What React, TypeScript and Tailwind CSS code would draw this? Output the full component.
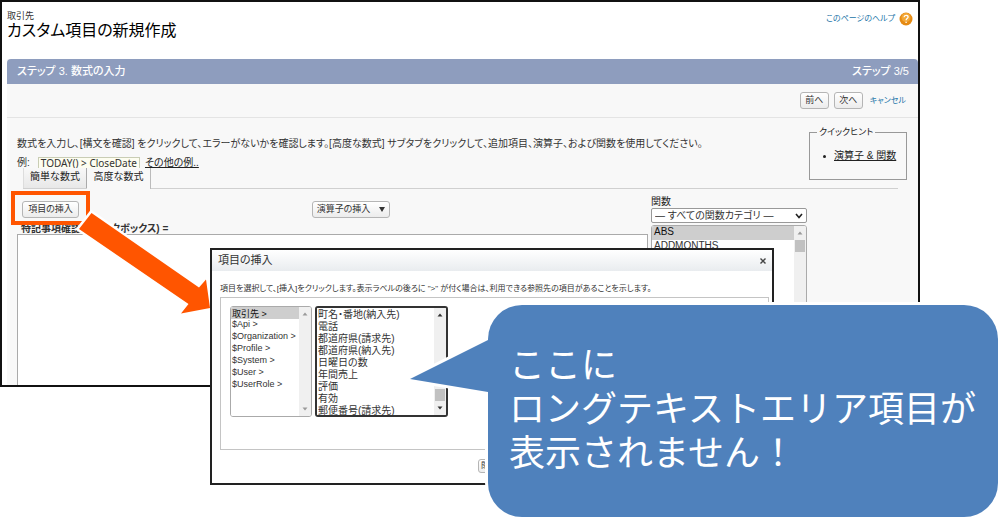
import type { ReactNode } from "react";
import clsx from "clsx";

const OBJECTS = [
  "取引先 >",
  "$Api >",
  "$Organization >",
  "$Profile >",
  "$System >",
  "$User >",
  "$UserRole >",
];

const FIELDS = [
  "町名・番地(納入先)",
  "電話",
  "都道府県(請求先)",
  "都道府県(納入先)",
  "日曜日の数",
  "年間売上",
  "評価",
  "有効",
  "郵便番号(請求先)",
];

const FUNCTIONS = ["ABS", "ADDMONTHS", "AND", "BEGINS", "BLANKVALUE", "BR", "CASE", "CASESAFEID", "CEILING"];

function SmallButton({ children, className }: { children: ReactNode; className?: string }) {
  return (
    <button
      type="button"
      className={clsx(
        "flex items-center justify-center rounded-[3px] border border-[#b5b5b5] bg-linear-to-b from-white to-[#ececec] leading-none whitespace-nowrap text-[#333]",
        className,
      )}
    >
      {children}
    </button>
  );
}

function ScrollTrack({ muted, thumb }: { muted?: boolean; thumb?: "start" | "end" }) {
  const color = muted ? "#9a9a9a" : "#333";
  return (
    <div className="flex w-3 shrink-0 flex-col items-center bg-[#f0f0f0]" aria-hidden="true">
      <svg viewBox="0 0 12 14" className="h-[14px] w-3 shrink-0">
        <path d="M3.5 8.5 6 5.5 8.5 8.5Z" fill={color} />
      </svg>
      {thumb === "start" && <div className="h-3 w-[10px] bg-[#c1c1c1]" />}
      <div className="grow" />
      {thumb === "end" && <div className="h-3 w-[10px] bg-[#c1c1c1]" />}
      <svg viewBox="0 0 12 14" className="h-[14px] w-3 shrink-0">
        <path d="M3.5 5.5 6 8.5 8.5 5.5Z" fill={color} />
      </svg>
    </div>
  );
}

type ListBoxProps = {
  label: string;
  items: string[];
  selected?: string;
  active?: boolean;
  thumb?: "start" | "end";
  className?: string;
  optionClassName: string;
};

function ListBox({ label, items, selected, active, thumb, className, optionClassName }: ListBoxProps) {
  return (
    <div
      className={clsx(
        "flex overflow-hidden rounded-[3px] bg-white",
        active ? "border-2 border-[#333]" : "border border-[#aaa]",
        className,
      )}
    >
      <select
        aria-label={label}
        multiple
        size={items.length}
        defaultValue={selected ? [selected] : []}
        className={clsx(
          "min-w-0 grow overflow-hidden bg-white text-[#333] outline-none [scrollbar-width:none]",
          active && "-mt-[2px]",
        )}
      >
        {items.map((item) => (
          <option key={item} value={item} className={optionClassName}>
            {item}
          </option>
        ))}
      </select>
      <ScrollTrack muted={!active} thumb={thumb} />
    </div>
  );
}

function PageHeader() {
  return (
    <header className="flex items-start justify-between px-[5px] pt-2">
      <div>
        <p className="text-[9px] leading-3">取引先</p>
        <h1 className="text-base leading-[17px] text-black">カスタム項目の新規作成</h1>
      </div>
      <a href="#help" className="flex items-center gap-1 pt-[2px] text-[8px] text-[#1b75a8]">
        このページのヘルプ
        <svg viewBox="0 0 14 14" className="size-[14px]" aria-hidden="true">
          <circle cx="7" cy="7" r="6.5" fill="#e58a12" />
          <circle cx="7" cy="5.5" r="4.5" fill="#f3a737" />
          <path
            d="M5 5.3c.1-1.3 1-1.9 2.1-1.9 1.2 0 2 .7 2 1.7 0 1.4-2 1.6-2 3.1M7.1 9.7v1.2"
            fill="none"
            stroke="#fff"
            strokeWidth="1.3"
          />
        </svg>
      </a>
    </header>
  );
}

function QuickTips() {
  return (
    <fieldset className="h-[54px] w-[98px] shrink-0 border border-[#999] pl-[13px]">
      <legend className="-ml-[6px] px-[2px] text-[9px] leading-3 text-[#222]">クイックヒント</legend>
      <ul className="pt-[10px] text-[10px] leading-4 whitespace-nowrap text-[#222]">
        <li className="flex items-center gap-2">
          <span className="size-[3px] rounded-full bg-[#222]" />
          <a href="#functions" className="underline">
            演算子 &amp; 関数
          </a>
        </li>
      </ul>
    </fieldset>
  );
}

function FormulaEditor() {
  return (
    <div className="flex gap-[3px] pr-[111px] pl-[10px]">
      <div className="min-w-0 grow">
        <div className="flex h-[34px] items-center gap-[233px] pt-[6px] pl-[5px]">
          <SmallButton className="h-[17px] w-[57px] text-[9px]">項目の挿入</SmallButton>
          <SmallButton className="h-[17px] w-[78px] gap-[9px] text-[9px]">
            演算子の挿入
            <svg viewBox="0 0 6 5" className="h-[5px] w-[6px]" aria-hidden="true">
              <path d="M0 0H6L3 5Z" fill="#333" />
            </svg>
          </SmallButton>
        </div>
        <label htmlFor="formula" className="block pl-1 text-[10px] leading-[11px] font-bold text-[#333]">
          特記事項確認(チェックボックス) =
        </label>
        <textarea
          id="formula"
          className="block h-[151px] w-full resize-none border border-b-0 border-[#aaa] bg-white"
        />
      </div>
      <div className="w-[156px] shrink-0 pt-[7px]">
        <label htmlFor="category" className="block text-[10px] leading-3 text-[#222]">
          関数
        </label>
        <div className="relative">
          <select
            id="category"
            className="block h-[15px] w-full appearance-none rounded-[2px] border border-[#999] bg-white pl-[3px] text-[10px] leading-3 text-[#333]"
          >
            <option>― すべての関数カテゴリ ―</option>
          </select>
          <svg viewBox="0 0 8 6" className="pointer-events-none absolute top-[5px] right-1 h-[6px] w-2" aria-hidden="true">
            <path d="M1 1 4 4.5 7 1" fill="none" stroke="#222" strokeWidth="1.6" />
          </svg>
        </div>
        <ListBox
          label="関数"
          items={FUNCTIONS}
          selected="ABS"
          thumb="start"
          className="mt-[2px] h-[160px]"
          optionClassName="h-[14px] min-h-0 px-[2px] py-0 text-[10px]"
        />
      </div>
    </div>
  );
}

function SetupPage() {
  return (
    <main className="w-[92%] overflow-hidden border-2 border-[#111] bg-white text-[#333]">
      <PageHeader />
      <section className="mt-5 ml-[5px] bg-[#f8f8f8]">
        <div className="flex h-[25px] items-center justify-between rounded-t-[4px] bg-[#8e9dbe] pr-[9px] pl-[10px] text-[11px] font-medium text-white">
          <h2>ステップ 3. 数式の入力</h2>
          <span>ステップ 3/5</span>
        </div>
        <div className="flex h-[34px] items-center justify-end gap-[5px] border-b border-[#e4e4e4] pr-3">
          <SmallButton className="h-[17px] w-[29px] text-[9px]">前へ</SmallButton>
          <SmallButton className="h-[17px] w-[29px] text-[9px]">次へ</SmallButton>
          <a href="#cancel" className="ml-[2px] text-[8px] text-[#1b75a8]">
            キャンセル
          </a>
        </div>
        <div className="flex h-[50px] items-start justify-between pt-2 pr-[11px] pl-[10px]">
          <div className="pt-[10px]">
            <p className="text-[10px] leading-4 whitespace-nowrap">
              数式を入力し、[構文を確認] をクリックして、エラーがないかを確認します。[高度な数式]
              サブタブをクリックして、追加項目、演算子、および関数を使用してください。
            </p>
            <p className="mt-[5px] flex items-center text-[10px] leading-3">
              例:
              <code className="mr-[5px] ml-2 border border-b-0 border-[#c9cdb4] bg-[#fdfdf0] px-[2px] font-['Noto_Sans',sans-serif] text-[10px] leading-[11px]">
                TODAY() &gt; CloseDate
              </code>
              <a href="#examples" className="text-[#222] underline">
                その他の例..
              </a>
            </p>
          </div>
          <QuickTips />
        </div>
        <div role="tablist" className="mr-5 ml-4 flex h-[21px] border-b border-[#d0d0d0] text-[10px] leading-4 text-[#222]">
          <button
            type="button"
            role="tab"
            aria-selected="false"
            className="w-16 border-r border-l border-r-[#aaa] border-l-[#ddd] bg-linear-to-b from-[#f8f8f8] to-[#e8e8e8] pb-[3px]"
          >
            簡単な数式
          </button>
          <button
            type="button"
            role="tab"
            aria-selected="true"
            className="-mb-px h-[21px] w-16 border-r border-[#bbb] bg-[#f8f8f8] pb-1"
          >
            高度な数式
          </button>
        </div>
        <FormulaEditor />
      </section>
    </main>
  );
}

function InsertFieldDialog() {
  return (
    <div
      role="dialog"
      aria-labelledby="dialog-title"
      className="absolute top-[248px] left-[21%] w-[56.4%] border-2 border-[#222] bg-white pb-[10px] text-[#333]"
    >
      <div className="flex h-[21px] items-center justify-between bg-linear-to-b from-white to-[#e9ecef] px-[6px]">
        <h2 id="dialog-title" className="text-[11px]">
          項目の挿入
        </h2>
        <button type="button" aria-label="閉じる">
          <svg viewBox="0 0 6 6" className="size-[6px]" aria-hidden="true">
            <path d="M.5.5 5.5 5.5M5.5.5.5 5.5" stroke="#444" strokeWidth="1.4" />
          </svg>
        </button>
      </div>
      <p className="px-2 pt-[10px] text-[8px] leading-4 whitespace-nowrap">
        項目を選択して、[挿入]をクリックします。表示ラベルの後ろに &quot;&gt;&quot;
        が付く場合は、利用できる参照先の項目があることを示します。
      </p>
      <div className="mr-[3px] ml-2 flex h-[153px] items-start gap-[3px] border border-[#c4c4c4] px-[9px] py-2">
        <ListBox
          label="オブジェクト"
          items={OBJECTS}
          selected="取引先 >"
          className="h-[111px] w-[82px]"
          optionClassName="h-3 min-h-0 px-[1px] py-0 text-[9px]"
        />
        <ListBox
          label="項目"
          items={FIELDS}
          active
          thumb="end"
          className="h-[111px] w-[133px]"
          optionClassName="h-3 min-h-0 px-[1px] py-0 text-[10px]"
        />
      </div>
      <div className="mt-[9px] flex justify-center">
        <SmallButton className="h-[14px] w-[28px] text-[8px]">閉じる</SmallButton>
      </div>
    </div>
  );
}

function Highlight() {
  return (
    <>
      <div className="absolute top-[191px] left-[11px] h-[34px] w-[79px] border-4 border-[#ff5500]" />
      <svg viewBox="0 0 150 120" className="absolute top-[205px] left-[70px] h-[120px] w-[150px]" aria-hidden="true">
        <path
          d="M21.5 8 129 82.5 136 74.5 140 103 111 108.5 118.5 99 9 24Z"
          fill="#ff5500"
          stroke="#fff"
          strokeWidth="5"
          paintOrder="stroke"
        />
      </svg>
    </>
  );
}

function Callout() {
  return (
    <aside className="absolute top-[305px] left-[488px] flex h-[212px] w-[51%] items-center rounded-[34px] bg-[#4f81bc] pl-[21px] ring-[3px] ring-white">
      <svg viewBox="0 0 82 60" className="absolute top-[31px] -left-[78px] h-[60px] w-[82px]" aria-hidden="true">
        <path d="M78 4 0 43 78 56" fill="none" stroke="#fff" strokeWidth="6" />
        <path d="M82 2 78 4 0 43 78 56 82 57Z" fill="#4f81bc" />
      </svg>
      <p className="pb-[2px] text-4xl leading-[44px] whitespace-nowrap text-white [font-feature-settings:normal]">
        ここに
        <br />
        ロングテキストエリア項目が
        <br />
        表示されません！
      </p>
    </aside>
  );
}

export default function App() {
  return (
    <div className="relative min-h-screen overflow-hidden bg-white font-['Liberation_Sans','Noto_Sans_CJK_JP',sans-serif] [font-feature-settings:'palt']">
      <SetupPage />
      <Highlight />
      <InsertFieldDialog />
      <Callout />
    </div>
  );
}
